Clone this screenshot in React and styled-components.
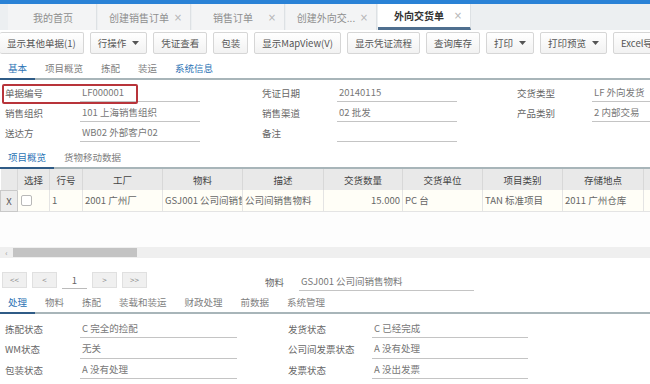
import React from "react";
import styled, { createGlobalStyle } from "styled-components";

const GlobalStyle = createGlobalStyle`
  html, body { margin: 0; padding: 0; background: #fff; }
  body {
    font-family: "Noto Sans CJK SC", "Noto Sans", sans-serif;
    font-size: 9.5px;
    color: #555;
    overflow: hidden;
  }
  * { box-sizing: border-box; }
`;

const docTabs = [
    { label: "我的首页", width: 89 },
    { label: "创建销售订单", width: 93, close: true },
    { label: "销售订单", width: 93, close: true },
    { label: "创建外向交...", width: 91, close: true },
    { label: "外向交货单", width: 93, close: true, active: true },
];

const tools = [
    { label: "显示其他单据(1)" },
    { label: "行操作", menu: true },
    { label: "凭证查看" },
    { label: "包装" },
    { label: "显示MapView(V)" },
    { label: "显示凭证流程" },
    { label: "查询库存" },
    { label: "打印", menu: true },
    { label: "打印预览", menu: true },
    { label: "Excel导出" },
];

const headerFields = [
    [
        { label: "单据编号", value: "LF000001", mark: true },
        { label: "销售组织", value: "101 上海销售组织" },
        { label: "送达方", value: "WB02 外部客户02" },
    ],
    [
        { label: "凭证日期", value: "20140115" },
        { label: "销售渠道", value: "02 批发" },
        { label: "备注", value: "" },
    ],
    [
        { label: "交货类型", value: "LF 外向发货" },
        { label: "产品类别", value: "2 内部交易" },
    ],
];

const columns = [
    { title: "", width: 17 },
    { title: "选择", width: 32 },
    { title: "行号", width: 33 },
    { title: "工厂", width: 80 },
    { title: "物料", width: 80 },
    { title: "描述", width: 81 },
    { title: "交货数量", width: 79 },
    { title: "交货单位", width: 80 },
    { title: "项目类别", width: 80 },
    { title: "存储地点", width: 81 },
    { title: "", width: 40 },
];

const statusLeft = [
    { label: "拣配状态", value: "C 完全的捡配" },
    { label: "WM状态", value: "无关" },
    { label: "包装状态", value: "A 没有处理" },
];

const statusRight = [
    { label: "发货状态", value: "C 已经完成" },
    { label: "公司间发票状态", value: "A 没有处理" },
    { label: "发票状态", value: "A 没出发票" },
];

function Caret() {
    return (
        <svg width="7" height="4" viewBox="0 0 7 4">
            <path d="M0 0 L7 0 L3.5 4 Z" fill="#555" />
        </svg>
    );
}

function TabRow({ items, active, blue = [] }) {
    return (
        <TabBar>
            {items.map((t, i) => (
                <SectionTab key={t} $active={i === active} $blue={blue.includes(i)}>
                    {t}
                </SectionTab>
            ))}
        </TabBar>
    );
}

export default function App() {
    return (
        <>
            <GlobalStyle />
            <Page>
                <TopBar />
                <DocTabs>
                    {docTabs.map((t) => (
                        <DocTab key={t.label} $w={t.width} $active={t.active}>
                            <DocTabLabel>{t.label}</DocTabLabel>
                            {t.close && <Close>×</Close>}
                        </DocTab>
                    ))}
                </DocTabs>

                <Toolbar>
                    {tools.map((b) => (
                        <ToolButton key={b.label}>
                            {b.label}
                            {b.menu && <Caret />}
                        </ToolButton>
                    ))}
                </Toolbar>

                <TabRow
                    items={["基本", "项目概览", "拣配", "装运", "系统信息"]}
                    active={0}
                    blue={[0, 4]}
                />

                <HeaderForm>
                    {headerFields.map((col, ci) => (
                        <FieldColumn key={ci}>
                            {col.map((f) => (
                                <FieldRow key={f.label}>
                                    <FieldLabel $w={75}>{f.label}</FieldLabel>
                                    <FieldValue $w={120}>{f.value}</FieldValue>
                                    {f.mark && <Highlight />}
                                </FieldRow>
                            ))}
                        </FieldColumn>
                    ))}
                </HeaderForm>

                <SubTabs>
                    <TabRow items={["项目概览", "货物移动数据"]} active={0} blue={[0]} />
                </SubTabs>

                <Grid>
                    <colgroup>
                        {columns.map((c, i) => (
                            <col key={i} style={{ width: c.width }} />
                        ))}
                    </colgroup>
                    <thead>
                        <tr>
                            {columns.map((c, i) => (
                                <HeadCell key={i}>{c.title}</HeadCell>
                            ))}
                        </tr>
                    </thead>
                    <tbody>
                        <tr>
                            <RowMark>X</RowMark>
                            <Cell>
                                <Check />
                            </Cell>
                            <Cell>1</Cell>
                            <Cell>2001 广州厂</Cell>
                            <Cell>GSJ001 公司间销售</Cell>
                            <Cell>公司间销售物料</Cell>
                            <Cell $right>15.000</Cell>
                            <Cell>PC 台</Cell>
                            <Cell>TAN 标准项目</Cell>
                            <Cell>2011 广州仓库</Cell>
                            <Cell />
                        </tr>
                    </tbody>
                </Grid>
                <GridBlank />
                <ScrollTrack>
                    <ScrollArrow>‹</ScrollArrow>
                    <ScrollThumb />
                </ScrollTrack>

                <Pager>
                    <PagerButtons>
                        <PageButton>&lt;&lt;</PageButton>
                        <PageButton>&lt;</PageButton>
                        <PageInput>1</PageInput>
                        <PageButton>&gt;</PageButton>
                        <PageButton>&gt;&gt;</PageButton>
                    </PagerButtons>
                    <FieldRow>
                        <FieldLabel $w={34}>物料</FieldLabel>
                        <FieldValue $w={175}>GSJ001 公司间销售物料</FieldValue>
                    </FieldRow>
                </Pager>

                <BottomTabs>
                    <TabRow
                        items={["处理", "物料", "拣配", "装载和装运", "财政处理", "前数据", "系统管理"]}
                        active={0}
                        blue={[0]}
                    />
                </BottomTabs>

                <StatusForm>
                    <FieldColumn>
                        {statusLeft.map((f) => (
                            <StatusRow key={f.label}>
                                <FieldLabel $w={75}>{f.label}</FieldLabel>
                                <FieldValue $w={157}>{f.value}</FieldValue>
                            </StatusRow>
                        ))}
                    </FieldColumn>
                    <FieldColumn>
                        {statusRight.map((f) => (
                            <StatusRow key={f.label}>
                                <FieldLabel $w={84}>{f.label}</FieldLabel>
                                <FieldValue $w={156}>{f.value}</FieldValue>
                            </StatusRow>
                        ))}
                    </FieldColumn>
                </StatusForm>
            </Page>
        </>
    );
}

const Page = styled.div`
    width: 650px;
    height: 384px;
    overflow: hidden;
    display: flex;
    flex-direction: column;
    background: #fff;
`;
const TopBar = styled.div`
    height: 4px;
    flex: none;
    background: #2a82d6;
`;
const DocTabs = styled.div`
    height: 26px;
    flex: none;
    display: flex;
    padding-left: 8px;
    background: #eceff1;
    gap: 1px;
`;
const DocTab = styled.div`
    width: ${(p) => p.$w}px;
    display: flex;
    align-items: center;
    padding: 0 6px 0 8px;
    background: ${(p) => (p.$active ? "#fff" : "#f3f4f5")};
    border-right: 1px solid #dde1e4;
    border-bottom: ${(p) => (p.$active ? "3px solid #4f6f8f" : "none")};
    color: ${(p) => (p.$active ? "#333" : "#8f8f8f")};
    font-size: 10px;
    font-weight: ${(p) => (p.$active ? "bold" : "normal")};
`;
const DocTabLabel = styled.span`
    flex: 1;
    text-align: center;
    white-space: nowrap;
`;
const Close = styled.span`
    width: 12px;
    text-align: center;
    color: #b5b5b5;
    font-size: 10px;
    font-weight: normal;
    font-family: "DejaVu Sans", sans-serif;
`;
const Toolbar = styled.div`
    height: 28px;
    flex: none;
    display: flex;
    gap: 6px;
    padding-top: 2px;
    white-space: nowrap;
`;
const ToolButton = styled.div`
    height: 22px;
    flex: none;
    display: flex;
    align-items: center;
    gap: 6px;
    padding: 0 7px;
    border: 1px solid #d6d6d6;
    border-radius: 2px;
    background: linear-gradient(#fff, #f2f2f2);
    color: #555;
    font-size: 9.5px;
    &:first-child {
        border-left: none;
    }
`;
const TabBar = styled.div`
    height: 22px;
    flex: none;
    display: flex;
    gap: 2px;
    border-bottom: 2px solid #a8b5b9;
`;
const SectionTab = styled.div`
    height: 22px;
    display: flex;
    align-items: center;
    padding: 0 8px;
    margin-bottom: -2px;
    color: ${(p) => (p.$blue ? "#2a72b4" : "#808080")};
    border-bottom: 2px solid ${(p) => (p.$active ? "#2f5b86" : "transparent")};
`;
const HeaderForm = styled.div`
    flex: none;
    display: grid;
    grid-template-columns: 257px 255px 1fr;
    padding: 3px 0 0 5px;
    height: 63px;
`;
const FieldColumn = styled.div`
    display: flex;
    flex-direction: column;
`;
const FieldRow = styled.div`
    position: relative;
    height: 20px;
    display: flex;
    align-items: stretch;
`;
const FieldLabel = styled.div`
    width: ${(p) => p.$w}px;
    flex: none;
    display: flex;
    align-items: center;
    color: #666;
    white-space: nowrap;
`;
const FieldValue = styled.div`
    width: ${(p) => p.$w}px;
    flex: none;
    display: flex;
    align-items: center;
    padding: 0 2px;
    margin-bottom: 1px;
    border-bottom: 1px solid #c4c4c4;
    color: #777;
    white-space: nowrap;
    overflow: hidden;
`;
const Highlight = styled.div`
    position: absolute;
    left: -3px;
    top: 1px;
    width: 136px;
    height: 20px;
    border: 2px solid #b8343a;
    border-radius: 2px;
`;
const SubTabs = styled.div`
    margin-top: 4px;
    flex: none;
`;
const Grid = styled.table`
    flex: none;
    table-layout: fixed;
    border-collapse: collapse;
    width: 683px;
`;
const HeadCell = styled.th`
    height: 21px;
    padding: 0;
    background: #e9e9e9;
    border-right: 1px solid #d8d8d8;
    color: #444;
    font-weight: normal;
    text-align: center;
`;
const Cell = styled.td`
    height: 21px;
    padding: 0 2px;
    background: #fffef7;
    border-right: 1px solid #e4e4e4;
    border-bottom: 1px solid #e4e4e4;
    color: #666;
    white-space: nowrap;
    overflow: hidden;
    text-align: ${(p) => (p.$right ? "right" : "left")};
`;
const RowMark = styled.td`
    height: 21px;
    padding: 0;
    background: #ececec;
    border: 1px solid #c9c9c9;
    color: #555;
    text-align: center;
`;
const Check = styled.div`
    width: 11px;
    height: 11px;
    margin-left: 1px;
    background: #fff;
    border: 1px solid #b8b8b8;
    border-radius: 2px;
`;
const GridBlank = styled.div`
    height: 35px;
    flex: none;
    background: #fdfdfd;
`;
const ScrollTrack = styled.div`
    height: 11px;
    flex: none;
    display: flex;
    align-items: center;
    background: #efefef;
`;
const ScrollArrow = styled.span`
    width: 13px;
    text-align: center;
    color: #999;
    font-size: 8px;
`;
const ScrollThumb = styled.div`
    width: 124px;
    height: 9px;
    background: #c3c3c3;
`;
const Pager = styled.div`
    flex: none;
    margin-top: 14px;
    height: 18px;
    display: flex;
    align-items: stretch;
    gap: 118px;
    padding-left: 2px;
`;
const PagerButtons = styled.div`
    display: flex;
    gap: 5px;
`;
const PageButton = styled.div`
    width: 25px;
    height: 16px;
    display: flex;
    align-items: center;
    justify-content: center;
    background: #f0f0f0;
    border: 1px solid #e0e0e0;
    color: #888;
    font-size: 8px;
`;
const PageInput = styled.div`
    width: 25px;
    height: 17px;
    display: flex;
    align-items: center;
    justify-content: center;
    border-bottom: 1px solid #bbb;
    color: #666;
`;
const BottomTabs = styled.div`
    margin-top: 2px;
    flex: none;
`;
const StatusForm = styled.div`
    flex: none;
    display: grid;
    grid-template-columns: 283px 1fr;
    padding: 5px 0 0 5px;
`;
const StatusRow = styled(FieldRow)`
    height: 20.5px;
`;
